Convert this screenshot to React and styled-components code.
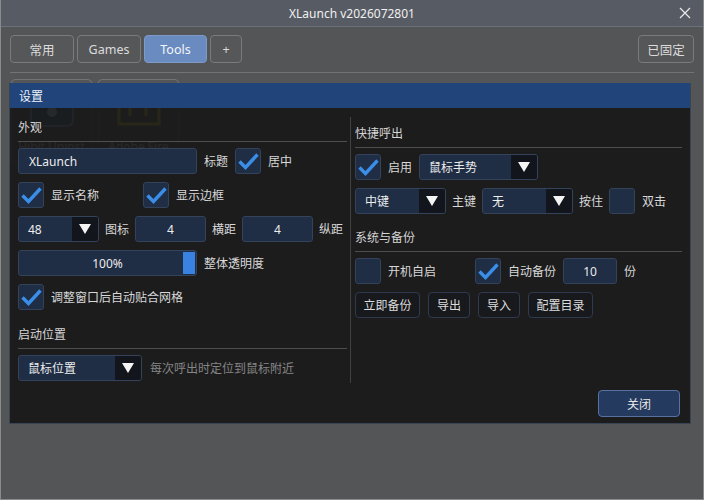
import React from 'react';
import styled, { createGlobalStyle } from 'styled-components';

const GlobalStyle = createGlobalStyle`
  html, body {
    margin: 0;
    padding: 0;
    background: #545557;
  }
  * {
    box-sizing: border-box;
  }
  body {
    font-family: "Noto Sans", "Noto Sans CJK SC", sans-serif;
  }
`;

const Window = styled.div`
  position: relative;
  width: 704px;
  height: 500px;
  background: #545557;
  border: 1px solid #8a8b8d;
  border-top: none;
  display: flex;
  flex-direction: column;
  overflow: hidden;
`;

const TitleBar = styled.div`
  height: 27px;
  flex-shrink: 0;
  background: #575b63;
  border-bottom: 1px solid #6d7179;
  display: flex;
  align-items: center;
  justify-content: center;
  position: relative;
  color: #f0f0f0;
  font-size: 12px;
`;

const CloseX = styled.div`
  position: absolute;
  right: 12px;
  top: 7px;
  width: 12px;
  height: 12px;
  display: flex;
`;

const TabBar = styled.div`
  display: flex;
  gap: 3px;
  padding: 8px 9px 0 9px;
`;

const Tab = styled.div`
  height: 28px;
  width: ${(p) => p.$w}px;
  display: flex;
  align-items: center;
  justify-content: center;
  border-radius: 4px;
  border: 1px solid ${(p) => (p.$active ? '#7d99c6' : '#7a7b7d')};
  background: ${(p) => (p.$active ? '#6a8bbf' : '#565759')};
  color: ${(p) => (p.$active ? '#f4f6fa' : '#dcdcdc')};
  font-size: 12.5px;
  margin-left: ${(p) => (p.$push ? 'auto' : '0')};
`;

const Rule = styled.div`
  height: 1px;
  background: #737375;
  margin: 9px 9px 0 9px;
`;

const TileGrid = styled.div`
  display: flex;
  gap: 6px;
  padding: 6px 10px 0 10px;
`;

const Tile = styled.div`
  width: 81px;
  height: 84px;
  border: 1px solid #747476;
  border-radius: 4px;
  display: flex;
  flex-direction: column;
  align-items: center;
  padding-top: 22px;
  gap: 10px;
  color: #e0e0e0;
  font-size: 12px;
`;

const Dialog = styled.div`
  position: absolute;
  left: 8px;
  top: 83px;
  width: 682px;
  height: 341px;
  display: flex;
  flex-direction: column;
  border: 1px solid #3a4457;
  border-top: none;
`;

const DialogHeader = styled.div`
  height: 25px;
  flex-shrink: 0;
  background: #21457b;
  color: #eef2f8;
  font-size: 12px;
  display: flex;
  align-items: center;
  padding-left: 9px;
`;

const DialogBody = styled.div`
  flex: 1;
  background: rgba(24, 24, 24, 0.92);
  display: flex;
  flex-direction: column;
`;

const Columns = styled.div`
  display: flex;
  margin-top: 9px;
  height: 266px;
  padding-left: 8px;
`;

const Column = styled.div`
  width: ${(p) => p.$w}px;
  padding-top: ${(p) => p.$top}px;
  display: flex;
  flex-direction: column;
`;

const VDivider = styled.div`
  width: 1px;
  background: #414141;
  margin: 0 4px 0 3px;
`;

const SectionTitle = styled.div`
  font-size: 12px;
  line-height: 16px;
  color: #d4d4d4;
  padding-bottom: 5px;
  border-bottom: 1px solid #4e4e4e;
  margin-top: ${(p) => p.$mt || 0}px;
  margin-bottom: 6px;
`;

const Rows = styled.div`
  display: flex;
  flex-direction: column;
  gap: 8px;
`;

const Row = styled.div`
  display: flex;
  align-items: center;
  height: 26px;
  gap: ${(p) => (p.$gap != null ? p.$gap : 7)}px;
`;

const Group = styled.div`
  display: flex;
  align-items: center;
  gap: 7px;
  width: ${(p) => (p.$w ? `${p.$w}px` : 'auto')};
`;

const Label = styled.span`
  font-size: 12px;
  color: ${(p) => (p.$muted ? '#858585' : '#d8d8d8')};
  white-space: nowrap;
  margin-left: ${(p) => p.$ml || 0}px;
`;

const Field = styled.div`
  width: ${(p) => p.$w}px;
  height: 26px;
  background: #1f2d45;
  border: 1px solid #34425a;
  border-radius: 3px;
  color: #ececec;
  font-size: 12px;
  display: flex;
  align-items: center;
  justify-content: ${(p) => (p.$center ? 'center' : 'flex-start')};
  padding-left: ${(p) => (p.$center ? 0 : 10)}px;
  flex-shrink: 0;
`;

const CheckBox = styled.div`
  width: 26px;
  height: 26px;
  background: #1f2d45;
  border: 1px solid #34425a;
  border-radius: 3px;
  display: flex;
  flex-shrink: 0;
`;

const SelectBox = styled.div`
  width: ${(p) => p.$w}px;
  height: 26px;
  background: #1f2d45;
  border: 1px solid #34425a;
  border-radius: 3px;
  display: flex;
  overflow: hidden;
  flex-shrink: 0;
`;

const SelectValue = styled.div`
  flex: 1;
  display: flex;
  align-items: center;
  padding-left: 9px;
  color: #ececec;
  font-size: 12px;
`;

const SelectArrow = styled.div`
  width: 26px;
  background: #12151b;
  display: flex;
  align-items: center;
  justify-content: center;
`;

const Slider = styled.div`
  position: relative;
  width: 179px;
  height: 26px;
  background: #1f2d45;
  border: 1px solid #34425a;
  border-radius: 3px;
  display: flex;
  align-items: center;
  justify-content: center;
  color: #ececec;
  font-size: 12px;
  flex-shrink: 0;
`;

const Handle = styled.div`
  position: absolute;
  right: 1px;
  top: 1px;
  bottom: 1px;
  width: 12px;
  background: #3a82e2;
`;

const ActionButton = styled.div`
  width: ${(p) => p.$w}px;
  height: 26px;
  border: 1px solid #2f3a4f;
  border-radius: 4px;
  background: #17191d;
  color: #dcdcdc;
  font-size: 12px;
  display: flex;
  align-items: center;
  justify-content: center;
`;

const Footer = styled.div`
  display: flex;
  justify-content: flex-end;
  padding: 7px 10px 0 0;
`;

const CloseButton = styled.div`
  width: 82px;
  height: 27px;
  background: #243a5e;
  border: 1px solid #5871a3;
  border-radius: 4px;
  color: #e8e8e8;
  font-size: 12px;
  display: flex;
  align-items: center;
  justify-content: center;
`;

const Check = ({ on }) => (
  <CheckBox>
    {on && (
      <svg width="24" height="24" viewBox="0 0 24 24">
        <path d="M3.5 12.5 L9.5 18.5 L21.5 5.5" fill="none" stroke="#3a8ee8" strokeWidth="3.4" strokeLinecap="butt" strokeLinejoin="miter" />
      </svg>
    )}
  </CheckBox>
);

const Select = ({ w, value }) => (
  <SelectBox $w={w}>
    <SelectValue>{value}</SelectValue>
    <SelectArrow>
      <svg width="12" height="10" viewBox="0 0 12 10">
        <path d="M0 0 H12 L6 10 Z" fill="#f4f4f4" />
      </svg>
    </SelectArrow>
  </SelectBox>
);

const App = () => {
  return (
    <>
      <GlobalStyle />
      <Window>
        <TitleBar>
          XLaunch v2026072801
          <CloseX>
            <svg width="12" height="12" viewBox="0 0 12 12">
              <path d="M1 1 L11 11 M11 1 L1 11" stroke="#eaeaea" strokeWidth="1.2" />
            </svg>
          </CloseX>
        </TitleBar>
        <TabBar>
          <Tab $w={64}>常用</Tab>
          <Tab $w={64}>Games</Tab>
          <Tab $w={63} $active>Tools</Tab>
          <Tab $w={32}>+</Tab>
          <Tab $w={56} $push>已固定</Tab>
        </TabBar>
        <Rule />
        <TileGrid>
          <Tile>
            <svg width="46" height="26" viewBox="0 0 46 26">
              <rect x="2" y="-10" width="42" height="34" rx="6" fill="#3b5a7a" stroke="#7aaad2" strokeWidth="2" />
              <circle cx="23" cy="10" r="5" fill="#d6e6f4" />
            </svg>
            Hibit Uninst
          </Tile>
          <Tile>
            <svg width="46" height="26" viewBox="0 0 46 26">
              <rect x="3" y="-10" width="40" height="32" fill="none" stroke="#e0c820" strokeWidth="3" />
              <path d="M14 2 V14 M14 2 H22 M30 2 V14" stroke="#e0c820" strokeWidth="3" fill="none" />
            </svg>
            Adobe Fire
          </Tile>
        </TileGrid>

        <Dialog>
          <DialogHeader>设置</DialogHeader>
          <DialogBody>
            <Columns>
              <Column $w={329} $top={3}>
                <SectionTitle>外观</SectionTitle>
                <Rows>
                  <Row>
                    <Field $w={179}>XLaunch</Field>
                    <Label>标题</Label>
                    <Check on />
                    <Label>居中</Label>
                  </Row>
                  <Row $gap={0}>
                    <Group $w={125}>
                      <Check on />
                      <Label>显示名称</Label>
                    </Group>
                    <Group>
                      <Check on />
                      <Label>显示边框</Label>
                    </Group>
                  </Row>
                  <Row $gap={6}>
                    <Select w={81} value="48" />
                    <Label>图标</Label>
                    <Field $w={71} $center>4</Field>
                    <Label>横距</Label>
                    <Field $w={71} $center>4</Field>
                    <Label>纵距</Label>
                  </Row>
                  <Row>
                    <Slider>
                      100%
                      <Handle />
                    </Slider>
                    <Label>整体透明度</Label>
                  </Row>
                  <Row>
                    <Check on />
                    <Label>调整窗口后自动贴合网格</Label>
                  </Row>
                </Rows>
                <SectionTitle $mt={17}>启动位置</SectionTitle>
                <Rows>
                  <Row $gap={8}>
                    <Select w={124} value="鼠标位置" />
                    <Label $muted>每次呼出时定位到鼠标附近</Label>
                  </Row>
                </Rows>
              </Column>
              <VDivider />
              <Column $w={327} $top={9}>
                <SectionTitle>快捷呼出</SectionTitle>
                <Rows>
                  <Row>
                    <Check on />
                    <Label>启用</Label>
                    <Select w={119} value="鼠标手势" />
                  </Row>
                  <Row $gap={6}>
                    <Select w={91} value="中键" />
                    <Label>主键</Label>
                    <Select w={91} value="无" />
                    <Label>按住</Label>
                    <Check />
                    <Label $ml={1}>双击</Label>
                  </Row>
                </Rows>
                <SectionTitle $mt={16}>系统与备份</SectionTitle>
                <Rows>
                  <Row $gap={0}>
                    <Group $w={120}>
                      <Check />
                      <Label>开机自启</Label>
                    </Group>
                    <Group>
                      <Check on />
                      <Label>自动备份</Label>
                      <Field $w={54} $center>10</Field>
                      <Label>份</Label>
                    </Group>
                  </Row>
                  <Row $gap={8}>
                    <ActionButton $w={65}>立即备份</ActionButton>
                    <ActionButton $w={42}>导出</ActionButton>
                    <ActionButton $w={42}>导入</ActionButton>
                    <ActionButton $w={65}>配置目录</ActionButton>
                  </Row>
                </Rows>
              </Column>
            </Columns>
            <Footer>
              <CloseButton>关闭</CloseButton>
            </Footer>
          </DialogBody>
        </Dialog>
      </Window>
    </>
  );
};

export default App;
